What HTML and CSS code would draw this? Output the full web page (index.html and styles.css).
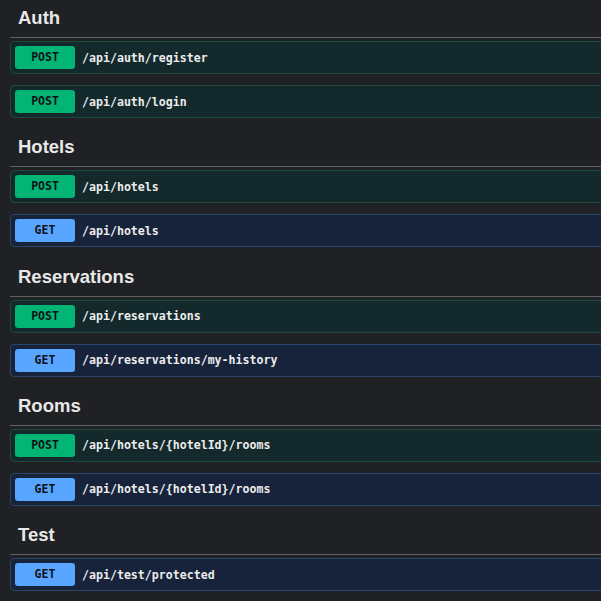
FILE: index.html
```html
<!DOCTYPE html>
<html>
<head>
<meta charset="utf-8">
<link rel="stylesheet" href="styles.css">
</head>
<body>
<div class="page">
  <section class="tag">
    <h3 class="tag-title">Auth</h3>
    <div class="op op-post"><span class="method">POST</span><span class="path">/api/auth/register</span></div>
    <div class="op op-post"><span class="method">POST</span><span class="path">/api/auth/login</span></div>
  </section>
  <section class="tag">
    <h3 class="tag-title">Hotels</h3>
    <div class="op op-post"><span class="method">POST</span><span class="path">/api/hotels</span></div>
    <div class="op op-get"><span class="method">GET</span><span class="path">/api/hotels</span></div>
  </section>
  <section class="tag">
    <h3 class="tag-title">Reservations</h3>
    <div class="op op-post"><span class="method">POST</span><span class="path">/api/reservations</span></div>
    <div class="op op-get"><span class="method">GET</span><span class="path">/api/reservations/my-history</span></div>
  </section>
  <section class="tag">
    <h3 class="tag-title">Rooms</h3>
    <div class="op op-post"><span class="method">POST</span><span class="path">/api/hotels/{hotelId}/rooms</span></div>
    <div class="op op-get"><span class="method">GET</span><span class="path">/api/hotels/{hotelId}/rooms</span></div>
  </section>
  <section class="tag">
    <h3 class="tag-title">Test</h3>
    <div class="op op-get"><span class="method">GET</span><span class="path">/api/test/protected</span></div>
  </section>
</div>
</body>
</html>
```
FILE: styles.css
```css
html, body {
  margin: 0;
  padding: 0;
  background: #1f2124;
  overflow: hidden;
}
.page {
  padding-left: 10px;
  width: 620px;
}
.tag {
  display: flex;
  flex-direction: column;
  gap: 11px;
  padding-bottom: 11.25px;
}
.tag-title {
  margin: 0 0 -8px 0;
  padding: 0 0 1px 8px;
  height: 36px;
  line-height: 36px;
  font-family: "Liberation Sans", Arial, sans-serif;
  font-weight: bold;
  font-size: 18.5px;
  color: #e8e8e8;
  border-bottom: 1px solid #5e6064;
}
.op {
  display: flex;
  align-items: center;
  gap: 7px;
  height: 23px;
  padding: 4px;
  border: 1px solid;
  border-radius: 4px;
}
.op-post {
  background: #13292b;
  border-color: #1d4a3a;
}
.op-get {
  background: #17233a;
  border-color: #2a4569;
}
.method {
  width: 60px;
  height: 23px;
  line-height: 23px;
  text-align: center;
  border-radius: 3px;
  font-family: "DejaVu Sans Mono", monospace;
  font-weight: bold;
  font-size: 11.5px;
  color: #0d1117;
}
.op-post .method { background: #03b574; }
.op-get .method { background: #58a6ff; }
.path {
  font-family: "DejaVu Sans Mono", monospace;
  font-weight: bold;
  font-size: 11.6px;
  color: #ececec;
}
```
